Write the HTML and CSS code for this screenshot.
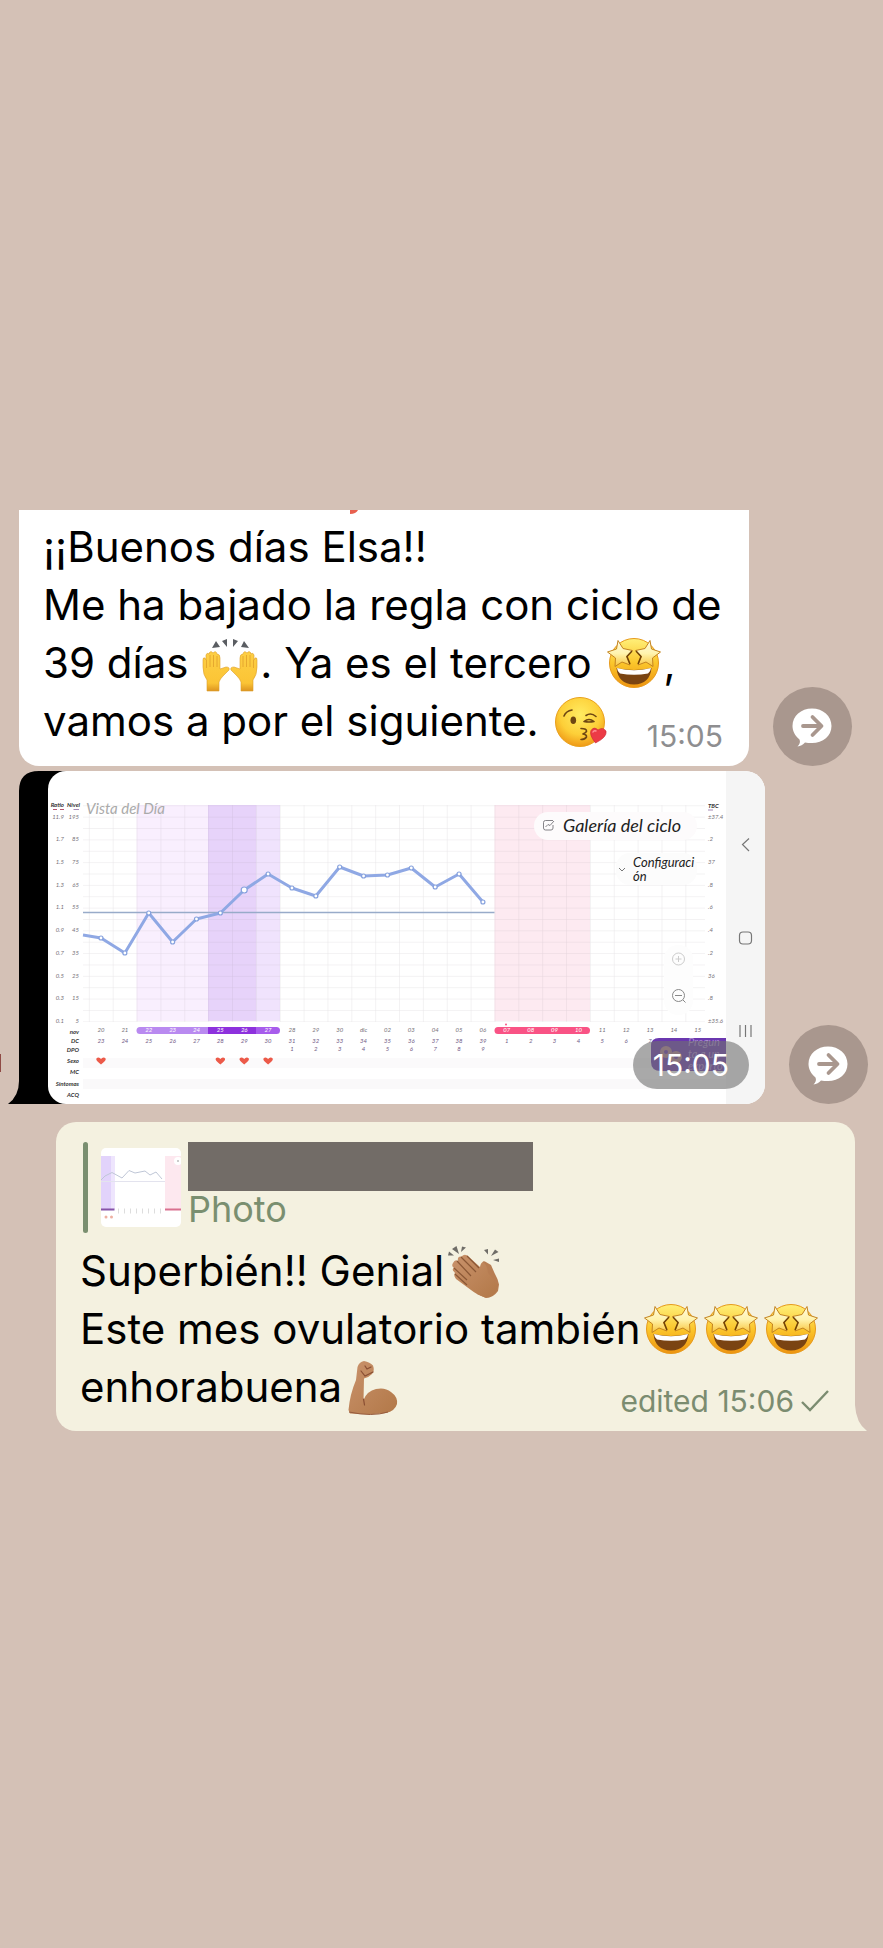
FILE: index.html
```html
<!DOCTYPE html>
<html lang="es">
<head>
    <meta charset="UTF-8">
    <meta name="viewport" content="width=device-width, initial-scale=1.0">
    <title>Chat</title>
    <link rel="stylesheet" href="styles.css">
</head>
<body>

    <!-- Emoji y símbolos reutilizables -->
    <svg class="sprites" aria-hidden="true">
        <defs>
            <radialGradient id="face" cx="50%" cy="35%" r="68%">
                <stop offset="0" stop-color="#ffec62"/>
                <stop offset="0.6" stop-color="#fdcf38"/>
                <stop offset="1" stop-color="#ee9312"/>
            </radialGradient>
            <linearGradient id="starFace" x1="0" y1="0" x2="0" y2="1">
                <stop offset="0" stop-color="#fff07a"/>
                <stop offset="0.5" stop-color="#fbc62b"/>
                <stop offset="1" stop-color="#ee940f"/>
            </linearGradient>
            <linearGradient id="star" x1="0" y1="0" x2="0" y2="1">
                <stop offset="0" stop-color="#fffbe0"/>
                <stop offset="0.5" stop-color="#fff3ad"/>
                <stop offset="1" stop-color="#f9c53c"/>
            </linearGradient>
            <linearGradient id="skin" x1="0" y1="0" x2="1" y2="1">
                <stop offset="0" stop-color="#c9926b"/>
                <stop offset="1" stop-color="#b27848"/>
            </linearGradient>
            <linearGradient id="hand" x1="0" y1="0" x2="0" y2="1">
                <stop offset="0" stop-color="#fdcf45"/>
                <stop offset="0.8" stop-color="#fbc435"/>
                <stop offset="1" stop-color="#dd9420"/>
            </linearGradient>
            <path id="handShape" d="M4 56V45Q0 40 0 32V25Q0 22 2 23L3 25V20Q4 17 6 19V18Q8 15 10 18Q13 15 14 19Q17 19 17 23V34L23 32Q27 32 26 35L20 41Q17 44 16 47V56Z"/>
        </defs>
        <symbol id="star-struck" viewBox="0 0 54 54">
            <circle cx="27" cy="28" r="24.5" fill="url(#starFace)" stroke="#e79a1c"/>
            <path d="M9.500 33Q27 37 44.500 33Q43 49 27 49.500Q11 49 9.500 33Z" fill="#7a4412"/>
            <path d="M10 33Q27 37.500 44 33Q43.500 37 41 38.500Q27 41 13 38.500Q10.500 37 10 33Z" fill="#fff"/>
            <path d="M11 5.500L16 13.500L25.500 15.500L19.500 21.500L23 30L15 27L8 31.500L8.500 23L0.500 17L9.500 14Z" fill="url(#star)" stroke="#c48420" stroke-linejoin="round"/>
            <path d="M43 5.500L38 13.500L28.500 15.500L34.500 21.500L31 30L39 27L46 31.500L45.500 23L53.500 17L44.500 14Z" fill="url(#star)" stroke="#c48420" stroke-linejoin="round"/>
            <path d="M25 16L20 21.500L23 29M29 16L34 21.500L31 29" fill="none" stroke="#704208" stroke-width="1.500"/>
        </symbol>
        <symbol id="kiss" viewBox="0 0 54 54">
            <circle cx="27" cy="29" r="24.500" fill="url(#face)" stroke="#e9a11c"/>
            <ellipse cx="20.300" cy="27.300" rx="2.800" ry="3.800" fill="#6e4612"/>
            <g fill="none" stroke="#6e4612" stroke-width="1.600" stroke-linecap="round">
                <path d="M11 23Q13 18 19 17"/>
                <path d="M33 22.500Q38 19 43 23.500"/>
                <path d="M31 28.500Q36 24.500 41 28.500M31 28.500Q36 29.500 41 28.500"/>
                <path d="M28 35.500Q34 35.500 33.500 38.500Q32 40.500 29.500 41Q34 41.500 33.500 44Q32 46.500 28 46.500"/>
            </g>
            <path d="M42.500 50Q36 42 38 37.500Q41 33 45 37Q50 33.500 53 38Q54.500 44 42.500 50Z" fill="#ec3b46" stroke="#c92531" stroke-width="0.600"/>
            <path d="M40 39Q41 37 43 38" stroke="#ff8f94" stroke-width="1.500" fill="none" stroke-linecap="round"/>
        </symbol>
        <symbol id="raised-hands" viewBox="0 0 54 54" overflow="visible">
            <path d="M9 13L13 6L17 12ZM19 6L24 4V12ZM30 4L35 6L30 12ZM38 12L41 6L46 13Z" fill="#5a5d62"/>
            <g fill="url(#hand)" stroke="#dc9d2c" stroke-width="0.600">
                <use href="#handShape"/>
                <use href="#handShape" transform="matrix(-1 0 0 1 54 0)"/>
            </g>
            <path d="M3.500 25V33M7 20V32M10.500 20V32M14 21V32M50.500 25V33M47 20V32M43.500 20V32M40 21V32" stroke="#dfa02b" stroke-width="0.800"/>
        </symbol>
        <symbol id="clap" viewBox="0 0 54 54" overflow="visible">
            <path d="M1 12.500L2 8.500L7 12.500ZM5 6L9.500 3L12 11ZM14 9L15 3.500L19 4.500ZM37 7L41 6V11.500ZM44 13L48 6.500L51.500 9ZM46 17L52 15.500V19Z" fill="#6f6d68"/>
            <path d="M34 24Q35 17 38 18.500L44 22L47.500 30Q51 36 52 41.500L51 48Q46 55 39 55L30 51Z" fill="#b77d52"/>
            <path d="M6 20Q8 16 11 18Q10 13 14.500 13.500Q18 10 22 14L33 24Q34 18 37 20Q40 22 41 30Q47 37 51 42L49 49Q44 55 38 54.500Q29 51 24 47L9 36Q6 32 8 30Q4 26 7 25Q4 23 6 20Z" fill="url(#skin)"/>
            <path d="M10 18L24 33M14 14L29 29M7 25L20 37M8 31L20 42M20 13L32 25" fill="none" stroke="#8a5735" stroke-width="1.200"/>
        </symbol>
        <symbol id="biceps" viewBox="0 0 54 54" overflow="visible">
            <path d="M11 21L12.500 8Q14 3 19 2Q25 3 28 6.500Q30 12 27 15Q23 19 19 19.500L18.500 41Q22 32 31 30Q40 28 46 33Q53 38 52 45Q50 52 41 54Q29 56 5 54.500L3.500 51Q5 35 11 21Z" fill="url(#skin)"/>
            <path d="M16 12L20 17L28 13M20 7L22 10L26 8M18.500 40L19.500 46" fill="none" stroke="#894e33" stroke-width="1.200" stroke-linecap="round"/>
            <path d="M4 53Q27 58 43 53" fill="none" stroke="#965b3d"/>
        </symbol>
        <symbol id="forward" viewBox="0 0 79 79">
            <path d="M39 21.500C50 21.500 58.500 29 58.500 39S50 56 39 56C36.500 56 34 56 32 55.500Q29 59 24.500 59.500Q28 56 26.500 52.500C22 49 19.500 44 19.500 39C19.500 29 28 21.500 39 21.500Z" fill="#fff"/>
            <path d="M30 39H48M39.500 30L48.500 39L39.500 48" fill="none" stroke="#a9978e" stroke-width="3.800" stroke-linecap="round" stroke-linejoin="round"/>
        </symbol>
    </svg>

    <main class="chat">

        <div class="row row-text">
            <div class="bubble bubble-in">
                <svg class="reaction" viewBox="0 0 8 4" aria-hidden="true"><path d="M0 0H8Q6 4 0 4Z" fill="#e8604f"/></svg>
                <p class="message">¡¡Buenos días Elsa!!<br>
                Me ha bajado la regla con ciclo de<br>
                39 días <svg class="emoji" role="img" aria-label="manos alzadas"><use href="#raised-hands"/></svg>. Ya es el tercero <svg class="emoji" role="img" aria-label="ojos de estrella"><use href="#star-struck"/></svg>,<br>
                vamos a por el siguiente. <svg class="emoji" role="img" aria-label="beso"><use href="#kiss"/></svg></p>
                <time class="time">15:05</time>
            </div>
            <button class="btn-forward" type="button" aria-label="Reenviar"><svg><use href="#forward"/></svg></button>
        </div>

        <div class="row row-photo">
            <span class="reaction-edge"></span>
            <div class="photo">
                <svg id="chart" class="chart" viewBox="0 0 746 333" role="img" aria-label="Gráfica del ciclo">
                    <defs>
                        <clipPath id="photoClip"><rect width="746" height="333" rx="20"/></clipPath>
                        <pattern id="grid" x="93.700" y="34.300" width="23.860" height="11.370" patternUnits="userSpaceOnUse">
                            <path d="M0 0H23.860M0 0V11.370" fill="none" stroke="#8d8492" stroke-opacity="0.220"/>
                        </pattern>
                        <clipPath id="barClip"><rect x="117.500" y="256" width="143.500" height="7" rx="3.500"/></clipPath>
                    </defs>
                    <path d="M0 20Q0 0 20 0H50V333H-11Q0 325 0 310Z" fill="#000"/>
                    <g clip-path="url(#photoClip)">
                        <rect x="29" width="730" height="333" rx="18" fill="#fff"/>
                        <rect x="64" y="287" width="643" height="10" fill="#fbfafb"/>
                        <rect x="64" y="308" width="643" height="10" fill="#faf9fa"/>
                        <rect x="117.500" y="34" width="71.800" height="216" fill="#f9effe"/>
                        <rect x="189" y="34" width="48" height="216" fill="#e7d3fa"/>
                        <rect x="237" y="34" width="24" height="216" fill="#f0e3fd"/>
                        <rect x="475.500" y="34" width="95.500" height="216" fill="#fdeaf1"/>
                        <rect x="64" y="34" width="622" height="217" fill="url(#grid)"/>
                        <path d="M64 141.500H475.500" stroke="#98abc9" stroke-width="1.400"/>
                        <path id="line" fill="none" stroke="#8fa8e4" stroke-width="3" stroke-linejoin="round"/>
                        <g id="dots" fill="#fff" stroke="#86a1dd" stroke-width="1.200"></g>

                        <g clip-path="url(#barClip)">
                            <rect x="117" y="256" width="73" height="7" fill="#b98af0"/>
                            <rect x="189" y="256" width="48" height="7" fill="#8d31dd"/>
                            <rect x="237" y="256" width="25" height="7" fill="#a75cec"/>
                        </g>
                        <rect x="475.500" y="256" width="95.500" height="7" rx="3.500" fill="#f95385"/>
                        <circle cx="487" cy="253.500" r="1" fill="#f95385"/>
                        <g id="labels"></g>
                        <path d="M34 38.500H38M41 38.500H45" stroke="#b5566f" stroke-width="1.200"/>
                        <path d="M54.500 38.500H60M689 39H694" stroke="#a58ab5" stroke-width="1.200"/>
                        <text class="day-title" x="67" y="43">Vista del Día</text>

                        <!-- Controles de la app -->
                        <rect x="515" y="41" width="163" height="28" rx="14" fill="#fdfbfc"/>
                        <path d="M534 49.500H526.500Q524.500 49.500 524.500 51.500V57Q524.500 59 526.500 59H532Q534 59 534 57V54M526.500 56L529 53.500L531 54.500L535 50" fill="none" stroke="#77757a" stroke-width="0.900"/>
                        <text class="gallery" x="544" y="61">Galería del ciclo</text>
                        <rect x="597" y="82" width="81" height="32" rx="14" fill="#fcfcfc"/>
                        <path d="M600 97L603 100L606 97" fill="none" stroke="#777"/>
                        <text class="config" x="614" y="96">Configuraci</text>
                        <text class="config" x="614" y="110">ón</text>
                        <rect x="645" y="174" width="29" height="70" rx="14" fill="#fdfdfd"/>
                        <path d="M659.500 185V191M656.500 188H662.500" stroke="#ccc"/>
                        <circle cx="659.500" cy="188" r="6" fill="none" stroke="#ccc"/>
                        <path d="M656 224.500H663M664 229L666.500 231.500" stroke="#888"/>
                        <circle cx="659.500" cy="224.500" r="6" fill="none" stroke="#888"/>

                        <path d="M707 267H640Q632 267 632 275V291Q632 300 642 300H707Z" fill="#6a37af"/>
                        <g fill="#b58391"><circle cx="647" cy="281" r="6"/><circle cx="657" cy="286" r="6"/></g>
                        <g fill="#6a37af"><circle cx="647" cy="281" r="2"/><circle cx="657" cy="286" r="2"/></g>
                        <g class="ask"><text x="669" y="275">Pregun</text><text x="669" y="287">ta a un</text><text x="669" y="299">experto</text></g>

                        <!-- Barra de navegación del móvil -->
                        <rect x="707" width="39" height="333" fill="#f5f5f5"/>
                        <g fill="none" stroke="#777" stroke-width="1.200">
                            <path d="M730 67.500L723.500 73.500L730 80"/>
                            <rect x="720.500" y="161" width="12" height="12" rx="3.500"/>
                            <path d="M721 254V266M726.500 254V266M732 254V266"/>
                        </g>
                    </g>
                </svg>
                <time class="time-pill">15:05</time>
            </div>
            <button class="btn-forward" type="button" aria-label="Reenviar"><svg><use href="#forward"/></svg></button>
        </div>

        <div class="row row-out">
            <div class="bubble bubble-out">
                <div class="quote">
                    <svg class="thumb" viewBox="0 0 80 79" role="img" aria-label="Photo">
                        <rect width="80" height="79" fill="#fff"/>
                        <rect y="8" width="10" height="53" fill="#e2d3fb"/>
                        <rect x="10" y="8" width="4" height="53" fill="#eee5fd"/>
                        <rect x="64" y="8" width="16" height="53" fill="#fde8ef"/>
                        <circle cx="77" cy="13" r="4" fill="#fff"/>
                        <path d="M76 13H78" stroke="#999"/>
                        <path d="M0 33.500H64" stroke="#e3e3ee"/>
                        <path d="M0 32L4 28L11 24.500L21 30L28 22.500L34 25L44 23L49 27L55 24L61 31" fill="none" stroke="#bfc6d6"/>
                        <path d="M0 61.500H13.500" stroke="#8653a8" stroke-width="2"/>
                        <path d="M64 61.500H80" stroke="#d9708f" stroke-width="2"/>
                        <path d="M17 63H62" stroke="#ddd" stroke-width="5" stroke-dasharray="1 5"/>
                        <g fill="#eeb0a2"><circle cx="5" cy="69" r="1.500"/><circle cx="10.500" cy="69" r="1.500"/></g>
                    </svg>
                    <div class="quote-body">
                        <span class="quote-name"></span>
                        <span class="quote-type">Photo</span>
                    </div>
                </div>
                <p class="message">Superbién!! Genial<svg class="emoji" role="img" aria-label="aplauso"><use href="#clap"/></svg><br>
                Este mes ovulatorio también<svg class="emoji" role="img" aria-label="ojos de estrella"><use href="#star-struck"/></svg><svg class="emoji" role="img" aria-label="ojos de estrella"><use href="#star-struck"/></svg><svg class="emoji" role="img" aria-label="ojos de estrella"><use href="#star-struck"/></svg><br>
                enhorabuena<svg class="emoji" role="img" aria-label="fuerza"><use href="#biceps"/></svg></p>
                <div class="time"><span>edited <time>15:06</time></span><svg class="check" viewBox="0 0 28 22" aria-label="enviado"><path d="M1 12L9 20L27 1" fill="none" stroke="currentColor" stroke-width="2.400"/></svg></div>
                <svg class="tail" viewBox="0 0 12 26" aria-hidden="true"><path d="M0 0Q1 18 12 26H0Z" fill="#f4f1e0"/></svg>
            </div>
        </div>

    </main>

    <script>
        const NS = 'http://www.w3.org/2000/svg';
        const FIRST_X = 82;
        const STEP = 23.87;
        const labels = document.getElementById('labels');
        const dots = document.getElementById('dots');

        // Temperatura de cada día (posición vertical)
        const temps = [167, 182, 142, 171, 148, 142, 119, 103, 117, 125, 96, 105, 104, 97, 116, 103, 131];
        const days = '20 21 22 23 24 25 26 27 28 29 30 dic 02 03 04 05 06 07 08 09 10 11 12 13 14 15'.split(' ');
        const inBar = [2, 3, 4, 5, 6, 7, 17, 18, 19, 20];

        function colX(i) {
            return FIRST_X + i * STEP;
        }

        function addText(text, x, y, cls) {
            const el = document.createElementNS(NS, 'text');
            el.setAttribute('x', x);
            el.setAttribute('y', y);
            el.setAttribute('class', cls);
            el.textContent = text;
            labels.appendChild(el);
        }

        // Línea y puntos
        let d = 'M64 164';
        temps.forEach((y, i) => {
            d += 'L' + colX(i) + ' ' + y;
            const dot = document.createElementNS(NS, 'circle');
            dot.setAttribute('cx', colX(i));
            dot.setAttribute('cy', y);
            dot.setAttribute('r', i === 6 ? 3 : 2);
            dots.appendChild(dot);
        });
        document.getElementById('line').setAttribute('d', d);

        // Filas de días
        days.forEach((day, i) => {
            addText(day, colX(i), 261, inBar.includes(i) ? 'tick mid on-bar' : 'tick mid');
            if (i < 24) {
                addText(i < 17 ? 23 + i : i - 16, colX(i), 272, 'tick mid cycle');
            }
            if (i >= 8 && i < 17) {
                addText(i - 7, colX(i), 280, 'tick mid cycle');
            }
        });

        // Corazones
        [0, 5, 6, 7].forEach(i => {
            const heart = document.createElementNS(NS, 'path');
            heart.setAttribute('d', 'M0 4Q-8 -2 -2.500 -3Q-1 -3 0 -1.500Q1 -3 2.500 -3Q8 -2 0 4Z');
            heart.setAttribute('transform', 'translate(' + colX(i) + ' 289.500)');
            heart.setAttribute('fill', '#ec5a49');
            labels.appendChild(heart);
        });

        // Ejes
        const ratio = ['11.9', '1.7', '1.5', '1.3', '1.1', '0.9', '0.7', '0.5', '0.3', '0.1'];
        const level = ['195', '85', '75', '65', '55', '45', '35', '25', '15', '5'];
        const tbc = ['±37.4', '.2', '37', '.8', '.6', '.4', '.2', '36', '.8', '±35.6'];
        ratio.forEach((value, i) => {
            const y = 47.5 + i * 22.74;
            addText(value, 45, y, 'tick end');
            addText(level[i], 60, y, 'tick end');
            addText(tbc[i], 689, y, 'tick');
        });
        addText('Ratio', 45, 36, 'head end');
        addText('Nivel', 61, 36, 'head end');
        addText('TBC', 689, 37, 'head');
        [['nov', 263], ['DC', 272], ['DPO', 281], ['Sexo', 292], ['MC', 303], ['Síntomas', 315], ['ACQ', 326]].forEach(row => {
            addText(row[0], 60, row[1], 'head end');
        });
    </script>

</body>
</html>
```
FILE: styles.css
```css
* {
    box-sizing: border-box;
    margin: 0;
    padding: 0;
}

body {
    font-family: Inter, "Liberation Sans", sans-serif;
    background-color: #d4c1b6;
    color: #000;
    min-height: 100vh;
}

.sprites {
    position: absolute;
    width: 0;
    height: 0;
}

.chat {
    padding: 510px 0;
}

/* Filas */
.row {
    display: flex;
    align-items: flex-end;
    gap: 24px;
    position: relative;
}

.row-text {
    padding: 0 31px 0 19px;
    margin-bottom: 5px;
}

.row-photo {
    padding: 0 15px 0 19px;
    margin-bottom: 18px;
}

.row-out {
    padding: 0 28px 0 56px;
}

/* Burbujas */
.bubble {
    flex: 1;
    min-width: 0;
    position: relative;
}

.bubble-in {
    background-color: #fff;
    border-radius: 0 0 20px 20px;
    padding: 8px 24px 16px;
}

.bubble-out {
    background-color: #f4f1e0;
    border-radius: 20px 20px 0 20px;
    padding: 20px 24px 15px;
}

.message {
    font-size: 42px;
    line-height: 58px;
    white-space: nowrap;
}

.emoji {
    width: 54px;
    height: 54px;
    margin: -4px 3px;
    vertical-align: -7px;
    overflow: visible;
}

.time {
    position: absolute;
    right: 26px;
    bottom: 12px;
    font-size: 30px;
    line-height: 36px;
    color: #8e8e90;
}

.bubble-out .time {
    display: flex;
    align-items: center;
    gap: 7px;
    color: #7b8c70;
}

.check {
    width: 28px;
    height: 22px;
}

.tail {
    position: absolute;
    left: 100%;
    bottom: 0;
    width: 12px;
    height: 26px;
}

.reaction {
    position: absolute;
    top: 0;
    left: 331px;
    width: 8px;
    height: 4px;
}

.reaction-edge {
    position: absolute;
    left: 0;
    bottom: 32px;
    width: 1px;
    height: 18px;
    background-color: #8f4a45;
}

/* Foto */
.photo {
    flex: 1;
    min-width: 0;
    position: relative;
}

.chart {
    display: block;
    width: 100%;
    overflow: visible;
    font-family: Lato, sans-serif;
    font-style: italic;
}

.day-title {
    font-size: 15px;
    fill: #aaa;
}

.gallery {
    font-size: 18px;
    fill: #222;
}

.config {
    font-size: 13px;
    fill: #222;
}

.ask {
    font-size: 11px;
    fill: #a98bd0;
}

.tick {
    font-size: 6px;
    fill: #77727a;
}

.cycle {
    fill: #715b86;
}

.on-bar {
    fill: #fff;
}

.head {
    font-size: 6px;
    font-weight: bold;
    fill: #333;
}

.mid {
    text-anchor: middle;
}

.end {
    text-anchor: end;
}

.time-pill {
    position: absolute;
    right: 16px;
    bottom: 15px;
    padding: 0 20px;
    border-radius: 24px;
    background-color: rgba(112, 112, 112, 0.6);
    color: #fff;
    font-size: 30px;
    line-height: 48px;
}

.btn-forward {
    width: 79px;
    height: 79px;
    border: none;
    border-radius: 50%;
    background-color: #a9978e;
    cursor: pointer;
}

.btn-forward svg {
    display: block;
    width: 79px;
    height: 79px;
}

/* Cita */
.quote {
    display: flex;
    gap: 7px;
    height: 91px;
    margin-bottom: 9px;
    margin-left: 3px;
    padding-left: 18px;
    position: relative;
}

.quote::before {
    content: "";
    position: absolute;
    left: 0;
    top: 0;
    width: 5px;
    height: 100%;
    border-radius: 3px;
    background-color: #7a8f70;
}

.thumb {
    align-self: center;
    width: 80px;
    height: 79px;
    border-radius: 5px;
}

.quote-name {
    display: block;
    width: 345px;
    height: 49px;
    background-color: #726c67;
}

.quote-type {
    display: block;
    font-size: 36px;
    line-height: 36px;
    color: #7a8f70;
}
```
